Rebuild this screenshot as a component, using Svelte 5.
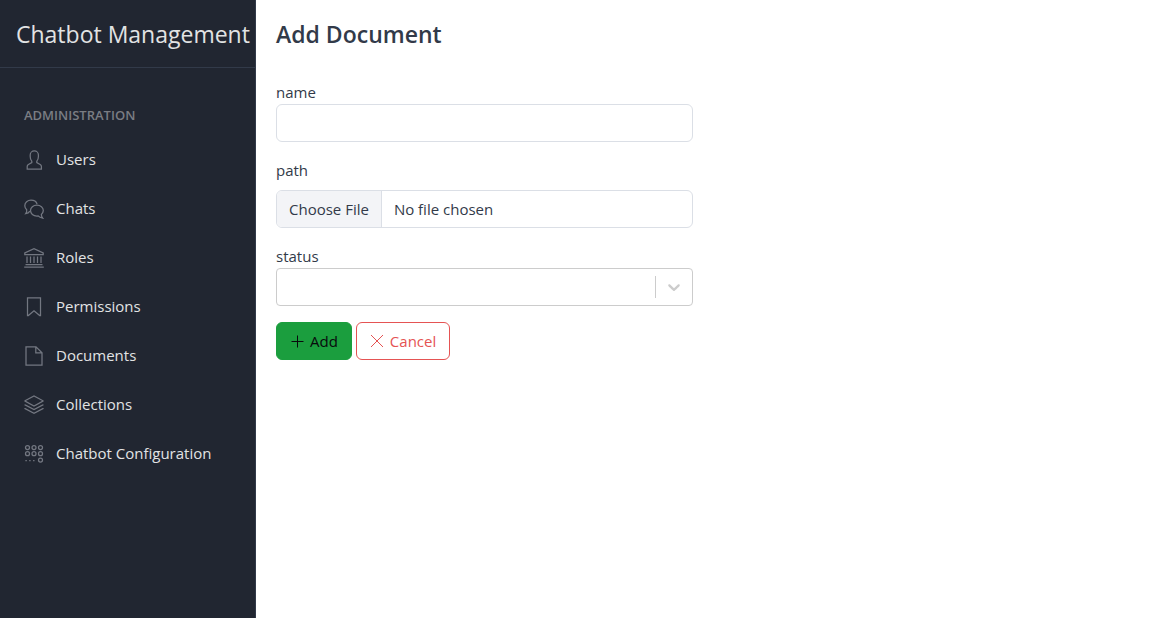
<script>
  const items = ['Users', 'Chats', 'Roles', 'Permissions', 'Documents', 'Collections', 'Chatbot Configuration'];
  let name = $state('');
  let status = $state('');
</script>

{#snippet glyph(item)}
  <svg class="icon" viewBox="0 0 20 20" aria-hidden="true">
    {#if item === 'Users'}
      <path d="M7.8 11.2C6.7 10.2 6.2 8.600 6.200 6.600V5A4.100 4.100 0 0 1 14.400 5V6.600C14.400 8.600 13.900 10.200 12.800 11.200V12.600L16.200 14.500Q17.400 15.200 17.400 16.600V19.200H3.200V16.600Q3.200 15.200 4.400 14.500L7.800 12.600Z" />
    {:else if item === 'Chats'}
      <path d="M5.900 12.200Q4.500 14.400 1.700 14.700Q3 13 2.700 10.700A6 5.600 0 0 1 .8 6.700C.8 3.500 3.600 1.200 7 1.200C9.900 1.200 12.300 2.700 13.100 5" />
      <path d="M12.900 6.200C9.300 6.200 6.500 8.500 6.500 11.600C6.500 14.700 9.300 17 12.900 17L14.100 16.900Q15.700 18.700 18.700 19.100Q17.300 17.500 17.400 15.400A6 5.600 0 0 0 19.300 11.600C19.300 8.500 16.500 6.200 12.900 6.200Z" />
    {:else if item === 'Roles'}
      <path d="M.8 6.500V5L10 .8L19.200 5V6.500ZM3 8.400V15M6.500 8.400V15M10 8.400V15M13.500 8.400V15M17 8.400V15M1.500 16.500H18.500M.2 19H19.800" />
    {:else if item === 'Permissions'}
      <path d="M3.500 .8H16.500V18.500H15.700L10 13.700L4.300 18.500H3.500Z" />
    {:else if item === 'Documents'}
      <path d="M2 .8H12L18 6.800V19H2ZM11.800 .8V6.900H18" />
    {:else if item === 'Collections'}
      <path d="M1 5.800L10 .9L19 5.800V6.100L10 11L1 6.100ZM1 9.400V9.900L10 14.600L19 9.900V9.400M1 13V13.500L10 18.300L19 13.500V13" />
    {:else}
      {#each [3.500, 10, 16.500] as cx}
        <circle {cx} cy="3.500" r="2" />
        <circle {cx} cy="9.700" r="2" />
      {/each}
      <circle cx="16.500" cy="16" r="2" />
      <path d="M1.400 16.500H2.800M5.200 16.500H6.600M9.100 16.500H10.500" />
    {/if}
  </svg>
{/snippet}

<div class="layout">
  <aside>
    <header>Chatbot Management</header>
    <nav aria-label="Administration">
      <div class="group">Administration</div>
      <ul>
        {#each items as item}
          <li><a href="#{item.toLowerCase().replace(' ', '-')}">{@render glyph(item)}<span>{item}</span></a></li>
        {/each}
      </ul>
    </nav>
  </aside>
  <main>
    <h1>Add Document</h1>
    <div class="columns">
      <form onsubmit={(event) => event.preventDefault()}>
        <div class="field">
          <label for="name">name</label>
          <input class="control" id="name" type="text" bind:value={name} />
        </div>
        <div class="field">
          <label class="spaced" for="path">path</label>
          <input class="control" id="path" type="file" />
        </div>
        <div class="field">
          <label for="status">status</label>
          <div class="select">
            <select id="status" bind:value={status}><option value=""></option></select>
            <span class="indicator">
              <svg viewBox="0 0 20 20" aria-hidden="true"><path d="M4.516 7.548c.436-.446 1.043-.481 1.576 0L10 11.295l3.908-3.747c.533-.481 1.141-.446 1.574 0 .436.445.408 1.197 0 1.615-.406.418-4.695 4.502-4.695 4.502a1.095 1.095 0 0 1-1.576 0S4.924 9.581 4.516 9.163s-.436-1.170 0-1.615z" /></svg>
            </span>
          </div>
        </div>
        <div class="actions">
          <button class="add" type="submit">
            <svg viewBox="0 0 16 16" aria-hidden="true"><path d="M7.500 2.500V14.500M1.500 8.500H13.500" /></svg>
            Add
          </button>
          <button class="cancel" type="button">
            <svg viewBox="0 0 16 16" aria-hidden="true"><path d="M1 2L13 14M13 2L1 14" /></svg>
            Cancel
          </button>
        </div>
      </form>
    </div>
  </main>
</div>

<style>
  :global(body) {
    margin: 0;
    background: #fff;
  }
  .layout {
    display: flex;
    min-height: 100vh;
    font: 15px/24px "Open Sans", "Noto Sans", sans-serif;
    color: #323a49;
  }
  .layout * {
    box-sizing: border-box;
  }
  aside {
    flex: 0 0 256px;
    background: #212631;
    color: #e2e3e4;
    border-right: 1px solid #323a49;
  }
  header {
    padding: 18px 0 17px 16px;
    border-bottom: 1px solid #323a49;
    font-size: 23px;
    line-height: 32px;
    white-space: nowrap;
  }
  nav {
    padding-top: 24px;
  }
  .group {
    padding: 13px 24px 10px;
    font-size: 13px;
    line-height: 20px;
    font-weight: 600;
    text-transform: uppercase;
    color: #7a7d83;
  }
  ul {
    margin: 0;
    padding: 0;
    list-style: none;
  }
  li a {
    display: flex;
    align-items: center;
    gap: 12px;
    padding: 12px 24px;
    line-height: 25px;
    color: inherit;
    text-decoration: none;
    white-space: nowrap;
  }
  .icon {
    flex: none;
    width: 20px;
    height: 20px;
    fill: none;
    stroke: #737781;
    stroke-width: 1.250;
  }
  main {
    flex: 1;
    min-width: 0;
    padding: 20px;
  }
  h1 {
    margin: 0 0 32px;
    font-size: 23px;
    line-height: 28px;
    font-weight: 600;
  }
  .columns {
    display: grid;
    grid-template-columns: 1fr 1fr;
    gap: 20px;
  }
  form {
    display: grid;
    gap: 16px;
    min-width: 0;
  }
  label {
    display: block;
  }
  .spaced {
    margin-bottom: 8px;
  }
  .control {
    display: block;
    width: 100%;
    height: 38px;
    padding: 6px 12px;
    border: 1px solid #dbdfe6;
    border-radius: 6px;
    background: #fff;
    font: inherit;
    color: inherit;
    overflow: hidden;
  }
  .control::file-selector-button {
    margin: -6px 12px -6px -12px;
    padding: 6px 12px;
    border: 0 solid #dbdfe6;
    border-right-width: 1px;
    background: #f3f4f7;
    font: inherit;
    color: inherit;
  }
  .select {
    display: grid;
  }
  select {
    grid-area: 1 / 1;
    appearance: none;
    width: 100%;
    height: 38px;
    padding: 0 48px 0 12px;
    border: 1px solid #ccc;
    border-radius: 4px;
    background: #fff;
    font: inherit;
    color: inherit;
  }
  .indicator {
    grid-area: 1 / 1;
    place-self: center end;
    display: flex;
    align-items: center;
    height: 22px;
    padding: 0 9px 0 8px;
    border-left: 1px solid #ccc;
    pointer-events: none;
  }
  .indicator svg {
    width: 20px;
    height: 20px;
    fill: #ccc;
  }
  .actions {
    display: flex;
    gap: 4px;
  }
  button {
    display: flex;
    align-items: center;
    gap: 4px;
    height: 38px;
    padding: 0 13px;
    border: 1px solid #1b9e3e;
    border-radius: 6px;
    background: #1b9e3e;
    font: inherit;
    color: #080a0c;
  }
  .cancel {
    border-color: #e55353;
    background: #fff;
    color: #e55353;
  }
  button svg {
    width: 16px;
    height: 16px;
    fill: none;
    stroke: currentColor;
    stroke-width: 1;
  }
</style>
